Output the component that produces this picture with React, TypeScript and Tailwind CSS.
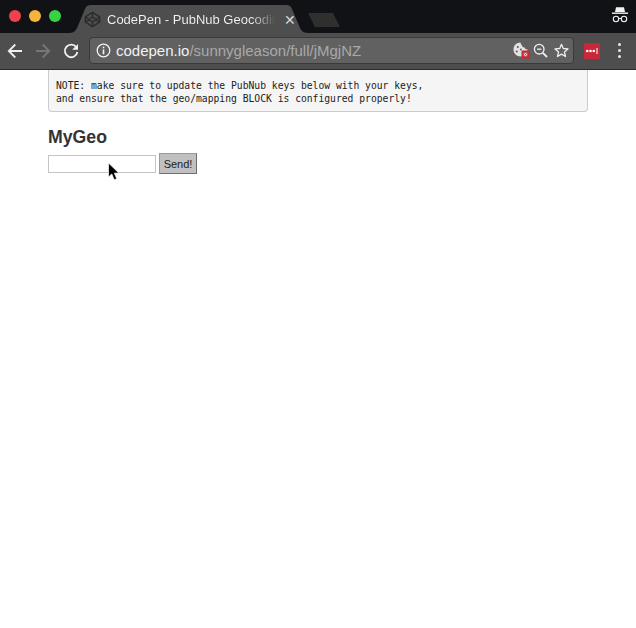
import React from "react";

const Sans = "font-['Liberation_Sans',Arial,sans-serif]";

function TabShape() {
  return (
    <svg className="absolute left-0 top-0" width="242" height="28" viewBox="0 0 242 28">
      <path d="M0 28 C5 28 7 27 9 23 L17 4 C18 1.500 19.500 0 23 0 L218 0 C221.500 0 223 1.500 224 4 L232 23 C234 27 236 28 242 28 Z" fill="#4e4e4f" />
    </svg>
  );
}

function CodepenIcon() {
  return (
    <svg width="17" height="17" viewBox="0 0 18 18" fill="none" stroke="#2b2b2c" strokeWidth="1.500" strokeLinejoin="round">
      <path d="M9 1.500 L16.500 6.300 V11.700 L9 16.500 L1.500 11.700 V6.300 Z" />
      <path d="M9 1.500 V6.300 M9 11.700 V16.500 M1.500 6.300 L9 11.700 L16.500 6.300 M1.500 11.700 L9 6.300 L16.500 11.700" />
    </svg>
  );
}

function Incognito() {
  return (
    <svg width="18" height="18" viewBox="0 0 18 18" fill="none">
      <path d="M5 1.200 H13 L14 6 H4 Z" fill="#f2f2f2" />
      <rect x="1" y="6.500" width="16" height="1.400" fill="#f2f2f2" />
      <circle cx="5" cy="13" r="2.700" stroke="#f2f2f2" strokeWidth="1.100" />
      <circle cx="13" cy="13" r="2.700" stroke="#f2f2f2" strokeWidth="1.100" />
      <path d="M7.500 12.500 H10.500" stroke="#f2f2f2" strokeWidth="1" />
    </svg>
  );
}

function Back({ color }: { color: string }) {
  return (
    <svg width="16" height="16" viewBox="0 0 16 16" fill="none" stroke={color} strokeWidth="1.800">
      <path d="M15 8 H2 M8.300 1.500 L1.800 8 L8.300 14.500" />
    </svg>
  );
}

function Forward({ color }: { color: string }) {
  return (
    <svg width="16" height="16" viewBox="0 0 16 16" fill="none" stroke={color} strokeWidth="1.800">
      <path d="M1 8 H14 M7.700 1.500 L14.200 8 L7.700 14.500" />
    </svg>
  );
}

function Reload() {
  return (
    <svg width="16" height="16" viewBox="0 0 16 16" fill="none">
      <path d="M13.300 4.200 A6.300 6.300 0 1 0 14.400 9" stroke="#f0f0f0" strokeWidth="1.800" />
      <path d="M15 1 V6.800 H9.200 Z" fill="#f0f0f0" />
    </svg>
  );
}

function Info() {
  return (
    <svg width="15" height="15" viewBox="0 0 15 15" fill="none">
      <circle cx="7.500" cy="7.500" r="6.300" stroke="#f5f5f5" strokeWidth="1.300" />
      <rect x="6.700" y="6.500" width="1.600" height="4.800" fill="#f5f5f5" />
      <rect x="6.700" y="3.700" width="1.600" height="1.600" fill="#f5f5f5" />
    </svg>
  );
}

function Cookie() {
  return (
    <svg width="17" height="17" viewBox="0 0 17 17">
      <path d="M7.500 0.500 C3.500 0.500 0.500 3.500 0.500 7.500 C0.500 11.500 3.500 14.500 7.500 14.500 C11.500 14.500 14.500 11.500 14.500 7.500 C13 7.500 11.800 6.800 11.500 5.500 C10 5.500 8.800 4.500 8.800 3 C8 2.500 7.600 1.500 7.500 0.500 Z" fill="#e2e2e2" />
      <circle cx="4.800" cy="5" r="1.100" fill="#5d5d5d" />
      <circle cx="3.800" cy="9.500" r="1.100" fill="#5d5d5d" />
      <circle cx="7.800" cy="7.500" r="0.900" fill="#5d5d5d" />
      <rect x="8.500" y="8.500" width="8" height="8" fill="#c92a35" />
      <rect x="10.800" y="10.800" width="3.400" height="3.400" fill="#eed3d3" />
      <path d="M11.300 11.300 L13.700 13.700 M13.700 11.300 L11.300 13.700" stroke="#a8323c" strokeWidth="0.700" />
    </svg>
  );
}

function Zoom() {
  return (
    <svg width="15" height="15" viewBox="0 0 15 15" fill="none" stroke="#f0f0f0">
      <circle cx="6.200" cy="6.200" r="4.800" strokeWidth="1.300" />
      <path d="M4 6.200 H8.400" strokeWidth="1.300" />
      <path d="M9.800 9.800 L14 14" strokeWidth="1.800" />
    </svg>
  );
}

function Star() {
  return (
    <svg width="15" height="15" viewBox="0 0 15 15" fill="none" stroke="#efefef" strokeWidth="1.300" strokeLinejoin="round">
      <path d="M7.500 1.300 L9.300 5.500 L14 5.900 L10.400 8.900 L11.500 13.500 L7.500 11.100 L3.500 13.500 L4.600 8.900 L1 5.900 L5.700 5.500 Z" />
    </svg>
  );
}

function LastPass() {
  return (
    <svg width="16" height="16" viewBox="0 0 16 16">
      <rect x="0" y="0" width="16" height="16" rx="1" fill="#c9283a" />
      <circle cx="3.200" cy="8" r="1.300" fill="#fff" />
      <circle cx="6.500" cy="8" r="1.300" fill="#fff" />
      <circle cx="9.800" cy="8" r="1.300" fill="#fff" />
      <rect x="12.500" y="5" width="1" height="6" fill="#fff" />
    </svg>
  );
}

function Cursor() {
  return (
    <svg className="absolute left-[107px] top-[92px]" width="13" height="20" viewBox="0 0 13 20">
      <path d="M1.500 1 V15 L4.800 12 L7.200 17.800 L9.800 16.700 L7.300 11.200 L11.800 11 Z" fill="#000" stroke="#fff" strokeWidth="0.700" />
    </svg>
  );
}

export default function App() {
  return (
    <div className={`h-[628px] w-[636px] overflow-hidden bg-white ${Sans}`}>
      <div className="flex h-[33px] items-start bg-[#111216]">
        <div className="flex items-center gap-[8px] pl-[9px] pt-[10px]">
          <span className="h-[12px] w-[12px] rounded-full bg-[#f0414e]" />
          <span className="h-[12px] w-[12px] rounded-full bg-[#f6b33e]" />
          <span className="h-[12px] w-[12px] rounded-full bg-[#36d344]" />
        </div>
        <div className="relative ml-[7px] mt-[5px] flex h-[28px] w-[242px] items-center pl-[16px] pt-[1px]">
          <TabShape />
          <div className="relative flex items-center">
            <CodepenIcon />
            <span className="ml-[6px] w-[172px] overflow-hidden whitespace-nowrap bg-gradient-to-r from-[#f4f4f4] from-[84%] to-[#4e4e4f] to-[98%] bg-clip-text text-[13px] leading-[18px] text-transparent">
              CodePen - PubNub Geocoding
            </span>
            <span className="ml-[5px] text-[14px] leading-[16px] text-[#d8d8d8]">✕</span>
          </div>
        </div>
        <div className="ml-[-2px] mt-[13px] h-[14px] w-[32px] bg-[#2f2f30] [clip-path:polygon(0_0,78%_0,100%_100%,22%_100%)]" />
        <div className="ml-auto pr-[7px] pt-[6px]">
          <Incognito />
        </div>
      </div>
      <div className="flex h-[37px] items-center border-b border-b-[#2c2c2c] bg-[#4e4e4f] pb-[1px]">
        <div className="ml-[7px] flex items-center gap-[12px]">
          <Back color="#efefef" />
          <Forward color="#777778" />
          <Reload />
        </div>
        <div className="ml-[10px] flex h-[27px] w-[485px] items-center rounded-[4px] border border-[#3a3a3a] bg-[#616161] pl-[6px] pr-[4px]">
          <Info />
          <span className="ml-[5px] whitespace-nowrap text-[15px] leading-[20px] text-[#f2f2f2]">
            codepen.io<span className="text-[#a9a9a9]">/sunnygleason/full/jMgjNZ</span>
          </span>
          <div className="ml-auto flex items-center gap-[3px]">
            <Cookie />
            <Zoom />
            <span className="ml-[3px]"><Star /></span>
          </div>
        </div>
        <div className="ml-[10px]"><LastPass /></div>
        <div className="ml-[18px] flex flex-col gap-[3px]">
          <span className="h-[3px] w-[3px] rounded-full bg-[#e8e8e8]" />
          <span className="h-[3px] w-[3px] rounded-full bg-[#e8e8e8]" />
          <span className="h-[3px] w-[3px] rounded-full bg-[#e8e8e8]" />
        </div>
      </div>
      <div className="relative px-[48px]">
        <div className="h-[42px] w-[540px] rounded-b-[4px] border border-t-0 border-[#cccccc] bg-[#f5f5f5] px-[7px] pt-[9px] font-['DejaVu_Sans_Mono',monospace] text-[9.700px] leading-[13px] text-[#222222]">
          <div className="whitespace-nowrap">NOTE: make sure to update the PubNub keys below with your keys,</div>
          <div className="whitespace-nowrap">and ensure that the geo/mapping BLOCK is configured properly!</div>
        </div>
        <h1 className="mt-[14px] text-[17.700px] font-bold leading-[22px] text-[#333333]">MyGeo</h1>
        <div className="mt-[5px] flex items-center gap-[3px]">
          <div className="h-[18px] w-[108px] border border-[#c4c4c4] bg-white" />
          <button className="h-[21px] w-[38px] border border-[#9a9a9a] border-b-[#6e6e6e] border-r-[#6e6e6e] bg-[#c0c0c0] text-center text-[11px] leading-[18px] text-[#222222]">
            Send!
          </button>
        </div>
        <Cursor />
      </div>
    </div>
  );
}
